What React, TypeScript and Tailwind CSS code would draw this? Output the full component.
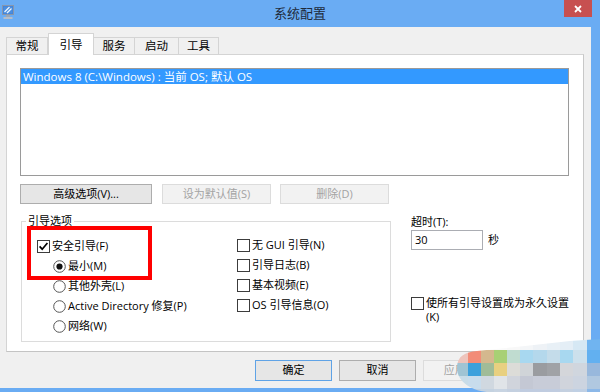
import React from "react";

function CheckBox({ checked }: { checked?: boolean }) {
  return (
    <svg width="13" height="13" viewBox="0 0 13 13" className="shrink-0">
      <rect x="0.5" y="0.5" width="12" height="12" fill="#fff" stroke="#3c3c3c" />
      {checked && <path d="M2.6 6.4 L5.2 9.2 L10.4 3" fill="none" stroke="#000" strokeWidth="1.7" />}
    </svg>
  );
}

function Radio({ checked }: { checked?: boolean }) {
  return (
    <svg width="13" height="13" viewBox="0 0 13 13" className="shrink-0">
      <circle cx="6.5" cy="6.5" r="5.8" fill="#fff" stroke="#555" />
      {checked && <circle cx="6.5" cy="6.5" r="3.1" fill="#111" />}
    </svg>
  );
}

function Btn({ label, disabled, w }: { label: string; disabled?: boolean; w: string }) {
  const base = "h-[20px] flex items-center justify-center text-[11px] border ";
  if (disabled) return <div className={base + w + " bg-[#f2f2f2] border-[#dcdcdc] text-[#a3a3a3]"}>{label}</div>;
  return <div className={base + w + " bg-[#e6e6e6] border-[#adadad] text-black"}>{label}</div>;
}

const cols = [455, 468, 481, 494, 507, 520, 533, 547, 560, 573, 587, 600];
const rows = [336, 350, 363, 376, 389, 392];
const colors: string[][] = [
  ["#fbfbfb", "#fbfbfb", "#fafafa", "#fafafa", "#f8f8f8", "#f4f6f8", "#eef2f6", "#e8f0f6", "#e4eef6", "#d6e8f4", "#70b4f0"],
  ["#eec4bc", "#f28c78", "#d4b88e", "#a8d074", "#c0dcd0", "#a8d8f0", "#b4d8ec", "#c4dcea", "#a8d8f0", "#cce0ec", "#62b0f0"],
  ["#a0c4d4", "#3ca0dc", "#a0bc98", "#e8d080", "#dcdcd8", "#d0d4d8", "#9a9ca0", "#a0a2a6", "#d4d6da", "#d0d6de", "#98b8dc"],
  ["#c8dce8", "#c8dcec", "#d0d8e0", "#e0e4e8", "#d0d4dc", "#c4c8d4", "#c8ccd8", "#c8ccd8", "#d0d4dc", "#ccd4e0", "#b0c8e0"],
  ["#c0d0e0", "#c0d0e0", "#c4d2e0", "#c8d4e2", "#c4d0e0", "#c0cce0", "#c0cce0", "#c0cce0", "#c4d0e0", "#c0d0e4", "#8cb8e8"],
];

function Mosaic() {
  const ox = 455;
  const oy = 336;
  const cells: React.ReactNode[] = [];
  for (let r = 0; r < rows.length - 1; r++) {
    for (let c = 0; c < cols.length - 1; c++) {
      cells.push(
        <rect
          key={r + "-" + c}
          x={cols[c] - ox}
          y={rows[r] - oy}
          width={cols[c + 1] - cols[c]}
          height={rows[r + 1] - rows[r]}
          fill={colors[r][c]}
        />
      );
    }
  }
  return (
    <svg width="145" height="56" viewBox="0 0 145 56" className="absolute left-[455px] top-[336px]">
      <defs>
        <clipPath id="mz">
          <path d="M2 32 C2 20 10 16 22 15 L70 10 L115 5 L145 3 L145 56 L35 56 C18 56 2 46 2 32 Z" />
        </clipPath>
      </defs>
      <g clipPath="url(#mz)">{cells}</g>
    </svg>
  );
}

export default function App() {
  return (
    <div className="w-[600px] h-[392px] relative overflow-hidden bg-[#6aacf3] flex flex-col font-['Segoe_UI','Open_Sans','Noto_Sans_CJK_SC',sans-serif] text-black">
      {/* title bar */}
      <div className="h-[27px] shrink-0 relative flex items-start">
        <svg width="13" height="15" viewBox="0 0 13 15" className="ml-[2px] mt-[5px]">
          <rect x="0.5" y="0.5" width="11" height="9" fill="#3f7fd6" stroke="#8796ac" />
          <rect x="1.5" y="1.5" width="9" height="7" fill="#4a8ee0" />
          <path d="M2.5 7 L7.5 2 M5 8 L9.5 3.5" stroke="#e8f4ff" strokeWidth="1.3" />
          <rect x="4" y="10" width="4" height="2" fill="#9aa6b6" />
          <rect x="1.5" y="12" width="9" height="2" fill="#b4bdca" />
        </svg>
        <div className="absolute left-0 right-0 top-[5px] text-center text-[13px] leading-[16px] text-[#1e2a3a] font-['Noto_Sans_CJK_SC',sans-serif]">
          系统配置
        </div>
        <div className="absolute right-[8px] top-0 w-[28px] h-[17px] bg-[#c75050] flex items-center justify-center">
          <svg width="8" height="8" viewBox="0 0 8 8">
            <path d="M1 1 L7 7 M7 1 L1 7" stroke="#fff" strokeWidth="1.8" />
          </svg>
        </div>
      </div>

      {/* body */}
      <div className="w-[591px] h-[361px] bg-[#f0f0f0] flex flex-col">
        {/* tabs */}
        <div className="flex items-end h-[27px] pl-[6px] relative z-10">
          <div className="w-[42px] h-[17px] border border-b-0 border-[#d4d4d4] bg-[#f0f0f0] flex items-center justify-center text-[11.5px]">常规</div>
          <div className="w-[46px] h-[22px] border border-b-0 border-[#d4d4d4] bg-white flex items-start pt-[2px] justify-center text-[11.5px] mb-[-1px]">引导</div>
          <div className="w-[41px] h-[17px] border border-b-0 border-l-0 border-[#d4d4d4] bg-[#f0f0f0] flex items-center justify-center text-[11.5px]">服务</div>
          <div className="w-[44px] h-[17px] border border-b-0 border-l-0 border-[#d4d4d4] bg-[#f0f0f0] flex items-center justify-center text-[11.5px]">启动</div>
          <div className="w-[40px] h-[17px] border border-b-0 border-l-0 border-[#d4d4d4] bg-[#f0f0f0] flex items-center justify-center text-[11.5px]">工具</div>
        </div>

        {/* panel */}
        <div className="ml-[6px] w-[578px] h-[298px] border border-[#d4d4d4] border-b-[#c4c4c4] border-r-[#c8c8c8] bg-white flex flex-col pl-[13px]">
          {/* listbox */}
          <div className="mt-[13px] w-[549px] h-[108px] border border-[#9a9a9a] bg-white">
            <div className="h-[15px] bg-[#3399ff] text-white text-[11.5px] leading-[15px] pl-[2px] whitespace-nowrap">
              Windows 8 (C:\Windows) : 当前 OS; 默认 OS
            </div>
          </div>

          {/* buttons */}
          <div className="mt-[8px] flex">
            <Btn label="高级选项(V)..." w="w-[132px]" />
            <div className="ml-[10px]"><Btn label="设为默认值(S)" w="w-[109px]" disabled /></div>
            <div className="ml-[9px]"><Btn label="删除(D)" w="w-[109px]" disabled /></div>
          </div>

          {/* options */}
          <div className="mt-[11px] flex">
            <fieldset className="ml-[1px] w-[370px] h-[127px] border border-[#dcdcdc] p-0 m-0">
              <legend className="ml-[4px] px-[2px] text-[11px] leading-[12px]">引导选项</legend>
              <div className="flex pt-[9px]">
                <div className="flex flex-col pl-[15px] w-[215px]">
                  <div className="h-[20px] flex items-center gap-[2px] text-[11px]"><CheckBox checked />安全引导(F)</div>
                  <div className="h-[20px] flex items-center gap-[2px] text-[11px] pl-[16px]"><Radio checked />最小(M)</div>
                  <div className="h-[20px] flex items-center gap-[2px] text-[11px] pl-[16px]"><Radio />其他外壳(L)</div>
                  <div className="h-[20px] flex items-center gap-[2px] text-[11px] pl-[16px]"><Radio />Active Directory 修复(P)</div>
                  <div className="h-[20px] flex items-center gap-[2px] text-[11px] pl-[16px]"><Radio />网络(W)</div>
                </div>
                <div className="flex flex-col">
                  <div className="h-[20px] flex items-center gap-[2px] text-[11px] mt-[-1px]"><CheckBox />无 GUI 引导(N)</div>
                  <div className="h-[20px] flex items-center gap-[2px] text-[11px]"><CheckBox />引导日志(B)</div>
                  <div className="h-[20px] flex items-center gap-[2px] text-[11px]"><CheckBox />基本视频(E)</div>
                  <div className="h-[20px] flex items-center gap-[2px] text-[11px]"><CheckBox />OS 引导信息(O)</div>
                </div>
              </div>
            </fieldset>

            <div className="ml-[20px] flex flex-col">
              <div className="text-[11px] leading-[13px]">超时(T):</div>
              <div className="mt-[2px] flex items-center">
                <div className="w-[72px] h-[20px] border border-[#abadb3] bg-white text-[11px] leading-[18px] pl-[3px]">30</div>
                <div className="ml-[5px] text-[11px]">秒</div>
              </div>
              <div className="mt-[47px] flex items-start gap-[2px] w-[160px]">
                <CheckBox />
                <div className="text-[11px] leading-[14px] mt-[-1px]">使所有引导设置成为永久设置(K)</div>
              </div>
            </div>
          </div>
        </div>

        {/* footer */}
        <div className="flex justify-end gap-[7px] pr-[7px] mt-[8px]">
          <div className="w-[77px] h-[21px] flex items-center justify-center text-[11px] border border-[#5fa3e6] bg-[#e6e6e6]">确定</div>
          <div className="w-[77px] h-[21px] flex items-center justify-center text-[11px] border border-[#adadad] bg-[#e6e6e6]">取消</div>
          <div className="w-[77px] h-[21px] flex items-center justify-center text-[11px] border border-[#dcdcdc] bg-[#f2f2f2] text-[#a3a3a3]">应用(A)</div>
          <div className="w-[77px] h-[21px] flex items-center justify-center text-[11px] border border-[#adadad] bg-[#e6e6e6]">帮助</div>
        </div>
      </div>

      {/* red annotation box */}
      <div className="absolute left-[27px] top-[226px] w-[125px] h-[54px] border-[4px] border-[#ff0000]" />

      <Mosaic />
    </div>
  );
}
